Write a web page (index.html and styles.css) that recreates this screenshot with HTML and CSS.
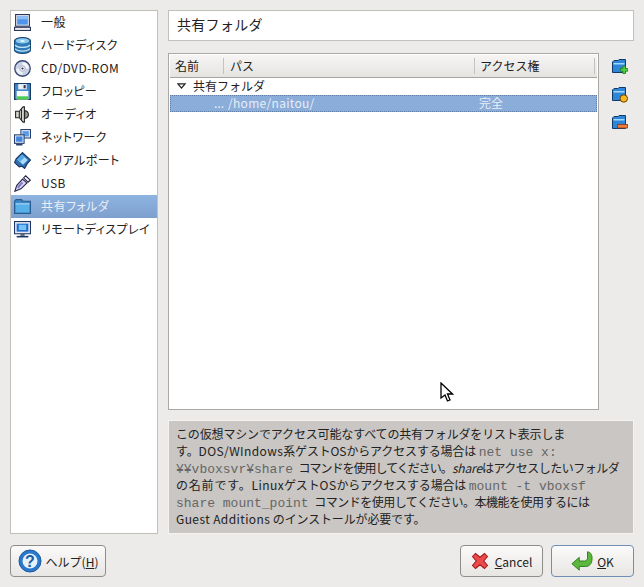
FILE: index.html
```html
<!DOCTYPE html>
<html lang="ja">
<head>
    <meta charset="UTF-8" />
    <title>共有フォルダ</title>
    <link rel="stylesheet" href="styles.css">
</head>
<body>
    <div class="dialog">
        <div class="content">
            <ul class="side-list">
                <li><svg class="icon" viewBox="0 0 16 16"><rect x="1.500" y=".5" width="13" height="11" fill="#dfe4ec" stroke="#2a3558"/><rect x="3" y="2" width="10" height="8" fill="#4f94ea"/><rect x="3" y="2" width="10" height="3" fill="#8cbcf4"/><rect x=".5" y="12.500" width="15" height="3" fill="#e8e8e8" stroke="#2a3558"/></svg>一般</li>
                <li><svg class="icon" viewBox="0 0 16 16"><path d="M.5 3.500C.5 1.800 4 .5 8 .5s7.500 1.300 7.500 3v9c0 1.700-3.500 3-7.500 3s-7.500-1.300-7.500-3z" fill="#2f7cb8" stroke="#17466f"/><ellipse cx="8" cy="3.700" rx="6.300" ry="2.500" fill="#8fcbef"/><ellipse cx="8" cy="3.700" rx="2" ry=".9" fill="#e8f5fc"/><path d="M1 7.500c1.500 1.800 4 2.300 7 2.300s5.500-.5 7-2.300M1 11c1.500 1.800 4 2.300 7 2.300s5.500-.5 7-2.300" fill="none" stroke="#bfe2f6" stroke-width="1.200"/></svg>ハードディスク</li>
                <li><svg class="icon" viewBox="0 0 16 16"><circle cx="8" cy="8" r="7.300" fill="#c8d2e6" stroke="#36466e" stroke-width="1.200"/><path d="M8 2a6 6 0 0 1 6 6H11a3 3 0 0 0-3-3z" fill="#f4f6fb"/><path d="M8 14a6 6 0 0 1-6-6h3a3 3 0 0 0 3 3z" fill="#eef0f8"/><circle cx="8" cy="8" r="2.400" fill="#fff" stroke="#8a94b0" stroke-width=".6"/><circle cx="8" cy="8" r="1" fill="#223"/></svg><span class="latin">CD/DVD-ROM</span></li>
                <li><svg class="icon" viewBox="0 0 16 16"><rect x=".5" y=".5" width="15" height="15" fill="#3f86cc" stroke="#173a66"/><rect x="4" y="1" width="8" height="5" fill="#eef0f2"/><rect x="9" y="2" width="2" height="3" fill="#2a3558"/><rect x="2.500" y="7.500" width="11" height="8" fill="#f8f8f8"/><rect x="2.500" y="12.500" width="11" height="3" fill="#4ccc50"/></svg>フロッピー</li>
                <li><svg class="icon" viewBox="0 0 16 16"><path d="M1.500 5H5l3.500-4.200h1.300v14.400H8.500L5 11H1.500z" fill="#d4d4cc" stroke="#222"/><path d="M5 5v6M7 3v10" stroke="#222"/><path d="M10 4.500c4.500-.5 5 7.500 0 7z" fill="#9a9a92" stroke="#222"/></svg>オーディオ</li>
                <li><svg class="icon" viewBox="0 0 16 16"><rect x="6.500" y=".5" width="9" height="8" fill="#e4e8f0" stroke="#27406e"/><rect x="8" y="2" width="6" height="5" fill="#5b9ae6"/><rect x=".5" y="5.500" width="9" height="8" fill="#e4e8f0" stroke="#27406e"/><rect x="2" y="7" width="6" height="5" fill="#3f86e0"/><rect x="2" y="14" width="6" height="1.500" fill="#27406e"/></svg>ネットワーク</li>
                <li><svg class="icon" viewBox="0 0 16 16"><path d="M8 .5l7.500 7-3 3.500-2.500 4.500-2.500-2-2.500.5L.5 10l1.500-3.500z" fill="#2f6cae" stroke="#16335f"/><path d="M7.500 2.500L13 7.500 8.500 12 3 7z" fill="#a8dcf8"/><path d="M7.500 2.500L10 5 6 9 3 7z" fill="#52a8e8"/></svg>シリアルポート</li>
                <li><svg class="icon" viewBox="0 0 16 16"><path d="M.8 15.300l1.700-5.300L8 3.800l4.200 3.700L6.500 13z" fill="#d8d4f2" stroke="#24244c"/><path d="M9 2.700L11 .7 15.300 4.800 13.200 6.800z" fill="#f6f6f6" stroke="#24244c"/><path d="M3.500 12l4.500-5" stroke="#8478c8" stroke-width="1.800"/></svg>USB</li>
                <li class="selected"><svg class="icon" viewBox="0 0 16 16"><path d="M.5 14.500V3L2 1.500h5L8.500 3h7v11.500z" fill="#3c86c8" stroke="#2a5c90"/><rect x="1.500" y="5" width="13" height="8.500" fill="#58b0e8"/><rect x="1.500" y="5" width="13" height="1" fill="#a8d8f6"/></svg><span>共有フォルダ</span></li>
                <li><svg class="icon" viewBox="0 0 16 16"><rect x=".5" y=".5" width="15" height="11.500" fill="#e4e8ee" stroke="#1f3764"/><rect x="2.500" y="2.500" width="11" height="7.500" fill="#1f6cd0"/><rect x="4.500" y="3.500" width="7" height="5" fill="#74c4f8"/><rect x="6" y="12" width="4" height="2" fill="#5c6678"/><rect x="2.500" y="14" width="11" height="1.500" fill="#1f3764"/></svg>リモートディスプレイ</li>
            </ul>
            <div class="main">
                <div class="page-title">共有フォルダ</div>
                <div class="table-area">
                    <div class="table">
                        <div class="table-head">
                            <div class="col-name">名前</div>
                            <div class="col-path">パス</div>
                            <div class="col-access">アクセス権</div>
                        </div>
                        <div class="group-row"><svg class="arrow" viewBox="0 0 9 6"><path d="M.8.8h7.400L4.500 5z" fill="#fff" stroke="#222" stroke-width="1.200"/></svg>共有フォルダ</div>
                        <div class="item-row">
                            <div class="col-name">...</div>
                            <div class="col-path">/home/naitou/</div>
                            <div class="col-access">完全</div>
                        </div>
                    </div>
                    <div class="tools">
                        <svg class="tool" viewBox="0 0 16 16"><path d="M.5 13.500V3L2 1.500h4L7 .5h6.500v13z" fill="#2f86d8" stroke="#123a66"/><rect x="1.500" y="4" width="11" height="1.500" fill="#9fd8f8"/><path d="M8.500 9.500h2.300V7.200h2.700v2.300h2.300v2.700h-2.300v2.300h-2.700v-2.300H8.500z" fill="#4fd03c" stroke="#1f7a1a" stroke-width=".8"/></svg>
                        <svg class="tool" viewBox="0 0 16 16"><path d="M.5 13.500V3L2 1.500h4L7 .5h6.500v13z" fill="#2f86d8" stroke="#123a66"/><rect x="1.500" y="4" width="11" height="1.500" fill="#9fd8f8"/><circle cx="11.800" cy="11.500" r="3.700" fill="#f6b81c" stroke="#6a4208"/></svg>
                        <svg class="tool" viewBox="0 0 16 16"><path d="M.5 13.500V3L2 1.500h4L7 .5h6.500v13z" fill="#2f86d8" stroke="#123a66"/><rect x="1.500" y="4" width="11" height="1.500" fill="#9fd8f8"/><rect x="5.500" y="9.500" width="10" height="3.500" fill="#f07c3c" stroke="#8a3a10" stroke-width=".8"/></svg>
                    </div>
                </div>
                <div class="info">
                    <div>この仮想マシンでアクセス可能なすべての共有フォルダをリスト表示しま</div>
                    <div>す。<span class="latin">DOS/WIndows</span>系ゲストOSからアクセスする場合は <code>net use x:</code></div>
                    <div><code>¥¥vboxsvr¥share</code> <span class="tight">コマンドを使用してください。</span><em>share</em><span class="snug">はアクセスしたいフォルダ</span></div>
                    <div><span class="wide">の名前です。</span><span class="latin">Linux</span>ゲスト<span class="latin">OS</span>からアクセスする場合は <code>mount -t vboxsf</code></div>
                    <div><code>share mount_point</code> <span class="snug">コマンドを使用してください。本機能を使用するには</span></div>
                    <div><span class="latin">Guest Additions</span> のインストールが必要です。</div>
                </div>
            </div>
        </div>
        <div class="buttons">
            <button class="btn btn-help"><svg class="btn-icon help-icon" viewBox="0 0 24 24"><circle cx="12" cy="12" r="11" fill="#2a78cc" stroke="#1a5aa0"/><circle cx="12" cy="12" r="7.500" fill="#e4f2fc"/><text x="12" y="17.500" text-anchor="middle" class="q">?</text></svg>ヘルプ(<u>H</u>)</button>
            <div class="spacer"></div>
            <button class="btn btn-cancel"><svg class="btn-icon cancel-icon" viewBox="0 0 24 24"><path d="M2 6l4-4 6 5 6-5 4 4-5 6 5 6-4 4-6-5-6 5-4-4 5-6z" fill="#ec4a4a" stroke="#a01818" stroke-width="1.400"/></svg><u>C</u>ancel</button>
            <button class="btn btn-ok"><svg class="btn-icon" viewBox="0 0 24 24"><path d="M1 15l8-7v4h6c2 0 3-2 3-3V2c3 0 5 3 5 7 0 6-3 9-7 9h-7v4z" fill="#5cb83c" stroke="#2c7a1c"/></svg><u>O</u>K</button>
        </div>
    </div>
    <svg class="cursor" viewBox="0 0 14 20"><path d="M1 1v15l4-3 2.500 6 2.500-1-2.500-6h5z" fill="#fff" stroke="#000" stroke-width="1.300"/></svg>
</body>
</html>
```

FILE: styles.css
```css
body {
    margin: 0;
    background-color: #ecebe9;
    font-family: "Noto Sans CJK JP", "Liberation Sans", sans-serif;
    font-size: 12px;
    color: #222;
}

.dialog {
    width: 644px;
    height: 587px;
    padding: 10px 10px 11px;
    box-sizing: border-box;
    display: flex;
    flex-direction: column;
}

.content {
    display: flex;
    gap: 10px;
    height: 524px;
}

.side-list {
    width: 148px;
    box-sizing: border-box;
    margin: 0;
    padding: 0;
    list-style: none;
    background-color: #fff;
    border: 1px solid #c2c0bd;
    font-feature-settings: "palt";
    letter-spacing: 0.4px;
}

.side-list li {
    height: 23px;
    box-sizing: border-box;
    display: flex;
    align-items: center;
    padding: 0 0 2px 3px;
}

.side-list .selected {
    background: linear-gradient(#8fb4e0, #7d9fce);
    color: #e8eef6;
}

.icon {
    width: 17px;
    height: 17px;
    margin: 0 10px -2px 0;
}

.main {
    width: 466px;
    display: flex;
    flex-direction: column;
}

.page-title {
    height: 31px;
    box-sizing: border-box;
    background-color: #fff;
    border: 1px solid #c2c0bd;
    font-size: 14px;
    line-height: 27px;
    letter-spacing: 0.3px;
    padding-left: 8px;
}

.table-area {
    display: flex;
    margin-top: 12px;
    height: 357px;
}

.table {
    width: 431px;
    box-sizing: border-box;
    background-color: #fff;
    border: 1px solid #aaa8a5;
    padding: 1px;
}

.table-head {
    display: flex;
    height: 21px;
    align-items: center;
    padding-bottom: 1px;
    background: linear-gradient(#f6f5f4, #e6e4e1);
    border-bottom: 1px solid #a5a3a0;
}

.col-name {
    width: 53px;
    box-sizing: border-box;
    padding-left: 5px;
}

.col-path {
    width: 251px;
    box-sizing: border-box;
    padding-left: 6px;
}

.col-access {
    flex: 1;
    padding-left: 5px;
}

.table-head .col-path,
.table-head .col-access {
    border-left: 1px solid #c4c2bf;
    line-height: 16px;
}

.table-head .col-access {
    border-right: 1px solid #c4c2bf;
    margin-right: 2px;
}

.group-row {
    display: flex;
    align-items: center;
    height: 17px;
    padding: 0 0 3px 7px;
    box-sizing: border-box;
}

.arrow {
    width: 9px;
    height: 6px;
    margin: 2px 7px 0 0;
}

.item-row {
    display: flex;
    height: 17px;
    line-height: 14px;
    box-sizing: border-box;
    background-color: #8aadda;
    border: 1px dotted #5e7ea8;
    color: #e8eef6;
}

.item-row .col-name {
    width: 52px;
    padding-left: 43px;
}

.item-row .col-path {
    padding-left: 5px;
    letter-spacing: 0.3px;
}

.tools {
    display: flex;
    flex-direction: column;
    gap: 12px;
    padding: 6px 0 0 13px;
}

.tool {
    width: 16px;
    height: 16px;
}

.info {
    margin-top: 10px;
    height: 114px;
    box-sizing: border-box;
    padding: 5px 7px;
    background-color: #c9c6c3;
    border: 1px solid #f4f3f2;
    white-space: nowrap;
    letter-spacing: -0.15px;
}

.info div {
    height: 17px;
    line-height: 16px;
}

.latin {
    letter-spacing: 0.4px;
}

.wide {
    letter-spacing: 0.8px;
}

.snug {
    letter-spacing: -0.5px;
}

.tight {
    letter-spacing: -1px;
}

code {
    font-family: "Liberation Mono", monospace;
    font-size: 13px;
    line-height: 1;
    letter-spacing: 0;
    margin-right: 3px;
    color: #666;
}

.buttons {
    display: flex;
    gap: 8px;
    margin-top: 11px;
}

.spacer {
    flex: 1;
}

.btn {
    height: 32px;
    box-sizing: border-box;
    display: flex;
    align-items: center;
    justify-content: center;
    padding: 0;
    font: inherit;
    color: #222;
    background: linear-gradient(#fbfafa, #e8e6e3);
    border: 1px solid #8f8d8a;
    border-radius: 4px;
}

.btn-help {
    width: 96px;
}

.btn-cancel {
    width: 83px;
}

.btn-ok {
    width: 83px;
    border-color: #6f8fb5;
}

.btn-icon {
    width: 22px;
    height: 22px;
    margin-right: 4px;
}

.help-icon {
    width: 24px;
    height: 24px;
}

.cancel-icon {
    width: 18px;
    height: 18px;
    margin-right: 6px;
}

.q {
    font: bold 16px "Liberation Sans", sans-serif;
    fill: #1a5aa0;
}

.cursor {
    position: absolute;
    left: 440px;
    top: 382px;
    width: 14px;
    height: 20px;
}
```
